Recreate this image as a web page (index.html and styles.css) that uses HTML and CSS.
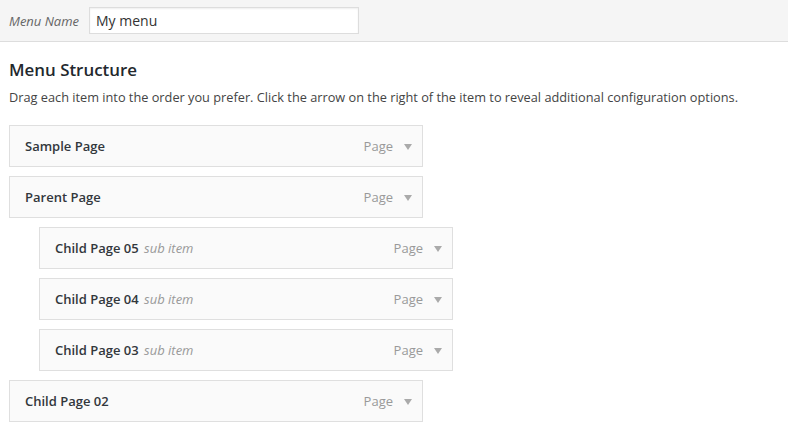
FILE: index.html
```html
<!DOCTYPE html>
<html>
<head>
<meta charset="utf-8">
<link rel="stylesheet" href="styles.css">
</head>
<body>
<div class="menu-header">
  <label class="menu-name-label" for="menu-name">Menu Name</label>
  <input id="menu-name" class="menu-name-input" type="text" value="My menu">
</div>
<div class="menu-body">
  <h3 class="title">Menu Structure</h3>
  <p class="desc">Drag each item into the order you prefer. Click the arrow on the right of the item to reveal additional configuration options.</p>
  <ul class="menu">
    <li class="item"><span class="item-title">Sample Page</span><span class="controls"><span class="item-type">Page</span><span class="arrow"></span></span></li>
    <li class="item"><span class="item-title">Parent Page</span><span class="controls"><span class="item-type">Page</span><span class="arrow"></span></span></li>
    <li class="item depth-1"><span class="item-title">Child Page 05 <span class="sub">sub item</span></span><span class="controls"><span class="item-type">Page</span><span class="arrow"></span></span></li>
    <li class="item depth-1"><span class="item-title">Child Page 04 <span class="sub">sub item</span></span><span class="controls"><span class="item-type">Page</span><span class="arrow"></span></span></li>
    <li class="item depth-1"><span class="item-title">Child Page 03 <span class="sub">sub item</span></span><span class="controls"><span class="item-type">Page</span><span class="arrow"></span></span></li>
    <li class="item"><span class="item-title">Child Page 02</span><span class="controls"><span class="item-type">Page</span><span class="arrow"></span></span></li>
  </ul>
</div>
</body>
</html>
```
FILE: styles.css
```css
* { box-sizing: border-box; }
html, body { margin: 0; padding: 0; background: #fff; }
body { font-family: "Open Sans", "Liberation Sans", sans-serif; color: #444; font-size: 13px; }

.menu-header {
  height: 42px;
  background: #f5f5f5;
  border-bottom: 1px solid #dddddd;
  display: flex;
  align-items: center;
  padding: 0 9px;
  gap: 10px;
}
.menu-name-label {
  font-style: italic;
  font-size: 13px;
  color: #666;
}
.menu-name-input {
  width: 270px;
  height: 27px;
  margin: 0;
  margin-top: -1px;
  border: 1px solid #dddddd;
  box-shadow: inset 0 1px 2px rgba(0,0,0,0.07);
  background: #fff;
  font-family: "Open Sans", "Liberation Sans", sans-serif;
  font-size: 14px;
  color: #333;
  padding: 0 6px;
  outline: none;
}

.menu-body { padding: 0 9px; }
.title {
  margin: 16px 0 0;
  font-size: 16.9px;
  font-weight: 600;
  color: #23282d;
  line-height: 24px;
}
.desc {
  margin: 5px 0 0;
  font-size: 12.75px;
  line-height: 20px;
  color: #444;
}
.menu { list-style: none; margin: 18px 0 0; padding: 0; }
.item {
  width: 414px;
  height: 42px;
  margin-bottom: 9px;
  background: #fafafa;
  border: 1px solid #dfdfdf;
  display: flex;
  align-items: center;
  justify-content: space-between;
  padding: 0 10px 0 15px;
}
.item.depth-1 { margin-left: 30px; }
.item-title {
  font-size: 13px;
  font-weight: 600;
  color: #32373c;
}
.sub {
  font-weight: 400;
  font-style: italic;
  color: #999;
  margin-left: 2px;
}
.controls { display: flex; align-items: center; }
.item-type { font-size: 13px; color: #999; }
.arrow {
  margin-left: 11px;
  width: 0; height: 0;
  border-left: 4px solid transparent;
  border-right: 4px solid transparent;
  border-top: 6px solid #aaa;
  margin-top: 1px;
}
```
